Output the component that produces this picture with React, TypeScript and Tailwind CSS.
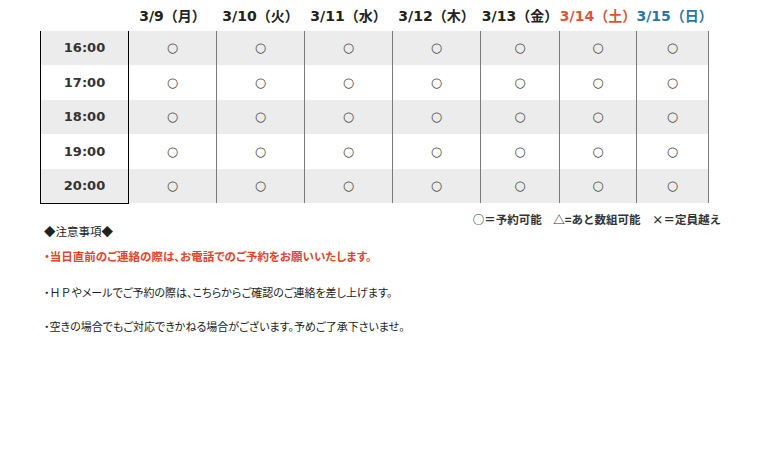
import React from "react";

const days = [
  { label: "3/9（月）", w: "w-[88px]", color: "text-[#222]" },
  { label: "3/10（火）", w: "w-[88px]", color: "text-[#222]" },
  { label: "3/11（水）", w: "w-[88px]", color: "text-[#222]" },
  { label: "3/12（木）", w: "w-[88px]", color: "text-[#222]" },
  { label: "3/13（金）", w: "w-[79px]", color: "text-[#222]" },
  { label: "3/14（土）", w: "w-[77px]", color: "text-[#e0533a]" },
  { label: "3/15（日）", w: "w-[72px]", color: "text-[#2d74a6]" },
];

const times = ["16:00", "17:00", "18:00", "19:00", "20:00"];

export default function App() {
  return (
    <div
      className="w-[773px] h-[454px] bg-white text-[#222] pl-[40px]"
      style={{ fontFamily: '"DejaVu Sans", "Noto Sans CJK JP", sans-serif' }}
    >
      <table className="border-collapse table-fixed w-[668px]">
        <thead>
          <tr className="h-[30.5px]">
            <th className="w-[88px] p-0"></th>
            {days.map((d) => (
              <th
                key={d.label}
                className={`${d.w} ${d.color} p-0 pt-[2px] text-[14px] font-bold whitespace-nowrap text-center`}
              >
                {d.label}
              </th>
            ))}
          </tr>
        </thead>
        <tbody>
          {times.map((t, i) => (
            <tr
              key={t}
              className={`h-[34.5px] ${i % 2 === 0 ? "bg-[#ececec]" : "bg-white"}`}
            >
              <td
                className={`p-0 text-center text-[13px] font-bold text-[#333] border-l border-r border-l-black border-r-black ${
                  i === times.length - 1 ? "border-b border-b-black" : ""
                }`}
              >
                {t}
              </td>
              {days.map((d) => (
                <td
                  key={d.label}
                  className="p-0 text-center text-[13px] text-[#444] border-r border-r-[#7a7a7a]"
                >
                  ○
                </td>
              ))}
            </tr>
          ))}
        </tbody>
      </table>
      <div
        className="w-[681px] text-right text-[11.5px] font-bold text-[#333] mt-[8px] leading-[14px]"
        style={{ fontFamily: '"Noto Sans CJK JP", sans-serif' }}
      >
        ○＝予約可能　△=あと数組可能　×＝定員越え
      </div>
      <div
        className="pl-[4px] text-[11.5px] text-[#222] leading-[14px] [font-feature-settings:'palt']"
        style={{ fontFamily: '"Noto Sans CJK JP", sans-serif' }}
      >
        <p className="mt-[-2px]">◆注意事項◆</p>
        <p className="mt-[11px] font-bold text-[#e0462c]">
          ・当日直前のご連絡の際は、お電話でのご予約をお願いいたします。
        </p>
        <p className="mt-[22px] text-[11px]">
          ・<span className="[font-feature-settings:normal]">ＨＰ</span>やメールでご予約の際は、こちらからご確認のご連絡を差し上げます。
        </p>
        <p className="mt-[20px] text-[11px]">
          ・空きの場合でもご対応できかねる場合がございます。予めご了承下さいませ。
        </p>
      </div>
    </div>
  );
}
